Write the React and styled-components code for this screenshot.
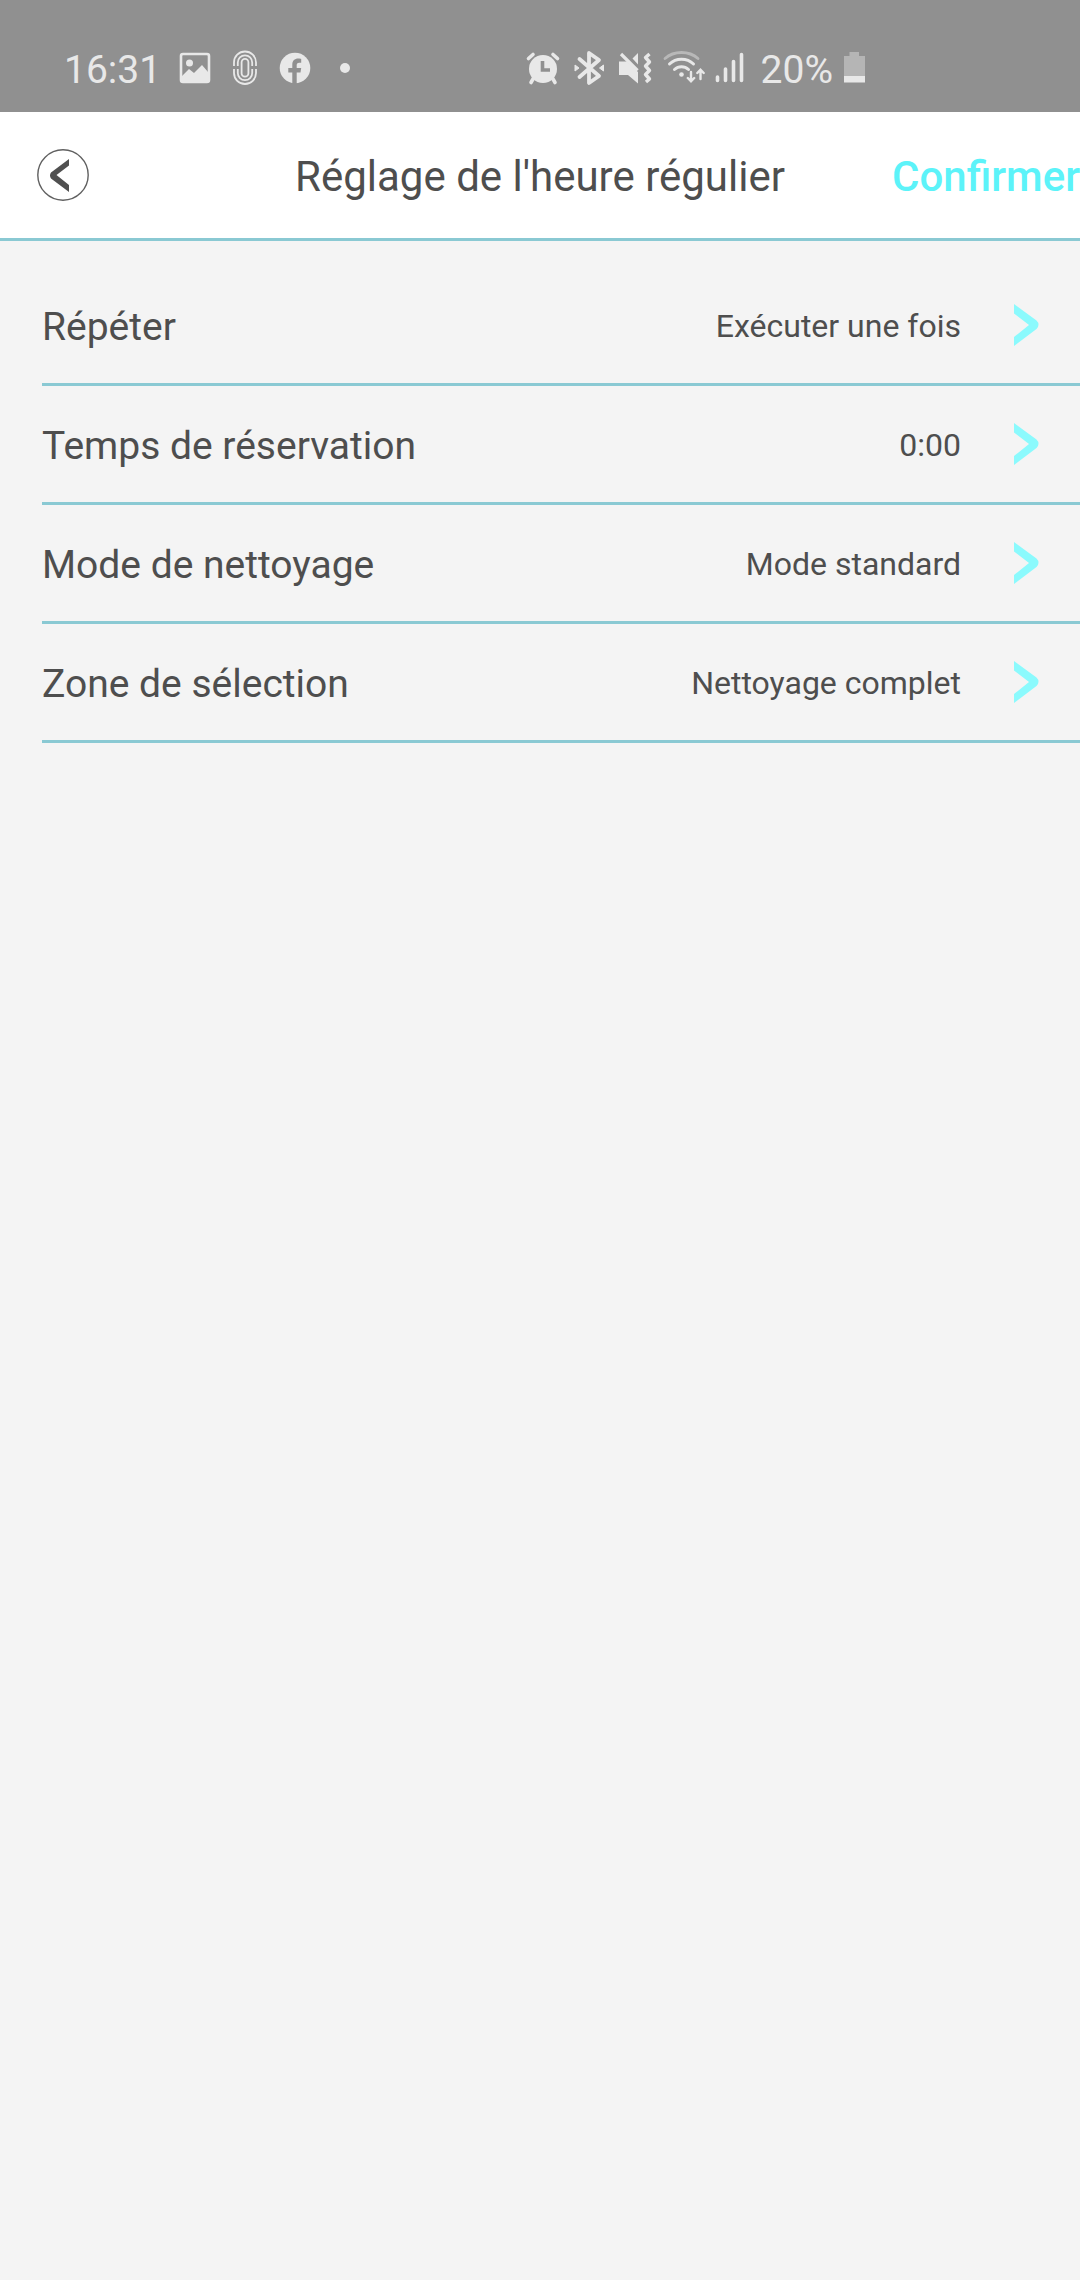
import React from 'react';
import styled, { createGlobalStyle } from 'styled-components';

const GlobalStyle = createGlobalStyle`
  *, *::before, *::after { box-sizing: border-box; }
  html, body { margin: 0; background: #f4f4f4; }
  body { font-family: Roboto, "Noto Sans", sans-serif; color: #4e4e4e; }
  button { font: inherit; color: inherit; background: none; border: 0; padding: 0; margin: 0; cursor: pointer; }
`;

const Screen = styled.div`
  display: flex;
  flex-direction: column;
  min-height: 100vh;
  background: #f4f4f4;
`;

const StatusBar = styled.div`
  display: flex;
  justify-content: space-between;
  align-items: center;
  height: 112px;
  padding: 24px 213px 0 64px;
  background: #909090;
  color: #e8e8e8;
`;

const StatusGroup = styled.div`
  display: flex;
  align-items: center;
  gap: ${({ $gap }) => $gap}px;
`;

const StatusText = styled.span`
  padding-top: 4px;
  font-size: 39px;
  line-height: 48px;
`;

const Glyph = styled.svg`
  display: block;
  flex: none;
  width: ${({ $w }) => $w}px;
  height: ${({ $h = 40 }) => $h}px;
  overflow: hidden;
`;

const Header = styled.header`
  display: grid;
  grid-template-columns: 1fr auto 1fr;
  align-items: center;
  height: 129px;
  background: #ffffff;
  border-bottom: 3px solid #8ac9d3;
  font-size: 42px;
  line-height: 52px;
`;

const BackButton = styled.button`
  justify-self: start;
  margin-left: 37px;
`;

const Title = styled.h1`
  margin: 0;
  padding-top: 4px;
  font-size: inherit;
  font-weight: 400;
`;

const ConfirmButton = styled.button`
  justify-self: end;
  padding-top: 4px;
  color: #5cf3f9;
  font-weight: 500;
`;

const SettingList = styled.ul`
  list-style: none;
  margin: 0;
  padding: 26px 0 0 42px;
`;

const SettingItem = styled.li`
  border-bottom: 3px solid #8ac9d3;
`;

const SettingButton = styled.button`
  display: flex;
  align-items: center;
  width: 100%;
  height: 116px;
  padding-right: 40px;
  text-align: left;
`;

const SettingLabel = styled.span`
  flex: 1;
  padding-top: 4px;
  font-size: 39px;
  line-height: 48px;
`;

const SettingValue = styled.span`
  margin-right: 51px;
  padding-top: 2px;
  font-size: 32px;
  line-height: 40px;
`;

const settings = [
  { label: 'Répéter', value: 'Exécuter une fois' },
  { label: 'Temps de réservation', value: '0:00' },
  { label: 'Mode de nettoyage', value: 'Mode standard' },
  { label: 'Zone de sélection', value: 'Nettoyage complet' },
];

const PictureIcon = () => (
  <Glyph $w={36} viewBox="0 0 36 40" aria-hidden="true">
    <rect x="4" y="6" width="28" height="28" rx="2" fill="none" stroke="currentColor" strokeWidth="2.600" />
    <circle cx="12.500" cy="15" r="3.500" fill="currentColor" />
    <path d="M5 28 L12 21 L17 25 L25 17 L31 24 V33 H5 Z" fill="currentColor" />
  </Glyph>
);

const FingerprintIcon = () => (
  <Glyph $w={36} viewBox="0 0 36 40" fill="none" stroke="currentColor" strokeWidth="1.800" aria-hidden="true">
    <path d="M7 18 V14.500 A11 11 0 0 1 29 14.500 V18" />
    <path d="M7 21 V25 A11 11 0 0 0 29 25 V21" />
    <path d="M10.800 18 V14.500 A7.200 7.200 0 0 1 25.200 14.500 V18" />
    <path d="M10.800 21 V25 A7.200 7.200 0 0 0 25.200 25 V21" />
    <rect x="14.600" y="10.800" width="6.800" height="17.800" rx="3.400" />
  </Glyph>
);

const FacebookIcon = () => (
  <Glyph $w={36} viewBox="0 0 36 40" aria-hidden="true">
    <circle cx="18" cy="20" r="15.300" fill="currentColor" />
    <path
      d="M15.300 36 V24.500 H11.300 V20 H15.300 V16.800 C15.300 12.700 17.600 10.600 21.300 10.600 C22.700 10.600 24.200 10.900 24.200 10.900 V14.800 H22.200 C20.300 14.800 19.700 15.900 19.700 17.200 V20 H24.200 L23.500 24.500 H19.700 V36 Z"
      fill="#909090"
    />
  </Glyph>
);

const DotIcon = () => (
  <Glyph $w={36} viewBox="0 0 36 40" aria-hidden="true">
    <circle cx="18" cy="20" r="5" fill="currentColor" />
  </Glyph>
);

const AlarmIcon = () => (
  <Glyph $w={40} viewBox="0 0 40 40" stroke="currentColor" strokeLinecap="round" aria-hidden="true">
    <circle cx="20" cy="21" r="14" fill="currentColor" stroke="none" />
    <path d="M5.500 10.500 L10 6.500 M30 6.500 L34.500 10.500" strokeWidth="3.600" />
    <path d="M10 31 L8 34.500 M30 31 L32 34.500" strokeWidth="3.600" />
    <path d="M19.500 13 V22 H27" fill="none" stroke="#909090" strokeWidth="3.600" strokeLinecap="butt" />
  </Glyph>
);

const BluetoothIcon = () => (
  <Glyph $w={40} viewBox="0 0 40 40" aria-hidden="true">
    <path
      d="M10.500 11 L30 28 L20 35 V5 L30 12 L10.500 29"
      fill="none"
      stroke="currentColor"
      strokeWidth="3.800"
      strokeLinejoin="round"
      strokeLinecap="round"
    />
    <path d="M6 17 L10 20 L6 23 Z M34.500 17 L30.500 20 L34.500 23 Z" fill="currentColor" stroke="currentColor" />
  </Glyph>
);

const VibrateIcon = () => (
  <Glyph $w={40} viewBox="0 0 40 40" aria-hidden="true">
    <path d="M4 13.500 H12 L23 24 V35.500 L13 27 H4 Z" fill="currentColor" />
    <path d="M17.500 10.500 L23 5 V16.500 Z" fill="currentColor" />
    <path d="M6 6 L22.500 22.500" stroke="currentColor" strokeWidth="3.200" />
    <path
      d="M34.500 6 L30.500 9.500 L34.500 14 L30.500 18 L34.500 22.500 L30.500 26.500 L34.500 31 L31 34"
      fill="none"
      stroke="currentColor"
      strokeWidth="3.400"
      strokeLinejoin="round"
    />
  </Glyph>
);

const WifiIcon = () => (
  <Glyph $w={44} viewBox="0 0 44 40" fill="none" stroke="currentColor" strokeWidth="3" strokeLinecap="round" aria-hidden="true">
    <path d="M4 10.500 C13 2.500 28 2.500 37 10.500" opacity="0.45" strokeWidth="2.800" />
    <path d="M8.500 16 C15 9.500 26 9.500 32.500 16" />
    <path d="M13.500 21.500 C17.500 17.800 23.500 17.800 27.500 21.500" />
    <circle cx="20.500" cy="26.500" r="2.300" fill="currentColor" stroke="none" />
    <path d="M30 24 V33 M26.800 30 L30 33.300 L33.200 30 M39.500 31 V22 M36.300 25 L39.500 21.700 L42.700 25" strokeWidth="2.400" />
  </Glyph>
);

const SignalIcon = () => (
  <Glyph $w={44} viewBox="0 0 44 40" stroke="currentColor" strokeWidth="3.600" strokeLinecap="round" aria-hidden="true">
    <path d="M6.500 29 V32.500 M14.500 21 V32.500 M22.500 13.500 V32.500 M30.500 6.500 V32.500" />
  </Glyph>
);

const BatteryIcon = () => (
  <Glyph $w={28} viewBox="0 0 28 40" aria-hidden="true">
    <path d="M10.500 4 H20 V8 H26 V28 H5 V8 H10.500 Z" fill="#b5b5b5" />
    <path d="M5 28 H26 V34.500 H5 Z" fill="currentColor" />
  </Glyph>
);

const BackIcon = () => (
  <Glyph $w={52} $h={52} viewBox="0 0 52 52" aria-hidden="true">
    <circle cx="26" cy="26" r="25.200" fill="none" stroke="#606060" strokeWidth="1.400" />
    <path d="M32 10 V16.500 L19.500 26 L32 36 V43 L14 29.500 Q12 26.500 14 23.500 Z" fill="#505050" />
  </Glyph>
);

const ChevronIcon = () => (
  <Glyph $w={28} $h={44} viewBox="0 0 28 44" aria-hidden="true">
    <path d="M2 1 L24.500 17.500 Q28.500 21.500 24.500 26 L2 43 V34 L17 22 L2 10.500 Z" fill="#8bfafd" />
  </Glyph>
);

export default function App() {
  return (
    <Screen>
      <GlobalStyle />
      <StatusBar>
        <StatusGroup $gap={16}>
          <StatusText>16:31</StatusText>
          <StatusGroup $gap={14}>
            <PictureIcon />
            <FingerprintIcon />
            <FacebookIcon />
            <DotIcon />
          </StatusGroup>
        </StatusGroup>
        <StatusGroup $gap={6}>
          <AlarmIcon />
          <BluetoothIcon />
          <VibrateIcon />
          <WifiIcon />
          <SignalIcon />
          <StatusText>20%</StatusText>
          <BatteryIcon />
        </StatusGroup>
      </StatusBar>

      <Header>
        <BackButton type="button" aria-label="Retour">
          <BackIcon />
        </BackButton>
        <Title>Réglage de l'heure régulier</Title>
        <ConfirmButton type="button">Confirmer</ConfirmButton>
      </Header>

      <SettingList>
        {settings.map(({ label, value }) => (
          <SettingItem key={label}>
            <SettingButton type="button">
              <SettingLabel>{label}</SettingLabel>
              <SettingValue>{value}</SettingValue>
              <ChevronIcon />
            </SettingButton>
          </SettingItem>
        ))}
      </SettingList>
    </Screen>
  );
}
